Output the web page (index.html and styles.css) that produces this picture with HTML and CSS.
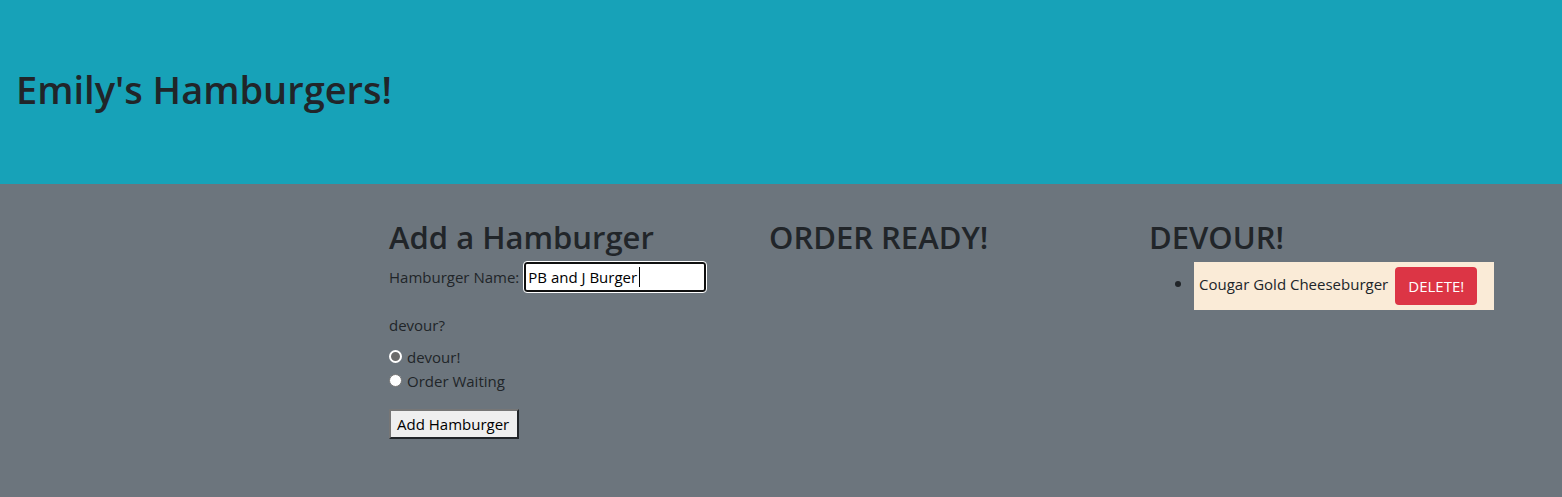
FILE: index.html
```html
<!DOCTYPE html>
<html lang="en">
<head>
<meta charset="utf-8">
<title>Emily's Hamburgers!</title>
<link rel="stylesheet" href="styles.css">
</head>
<body>
<header class="banner"><h1 class="title">Emily's Hamburgers!</h1></header>
<main class="columns">
  <section class="column">
    <h2 class="heading">Add a Hamburger</h2>
    <form class="form">
      <div class="name-row">
        <label for="name">Hamburger Name:</label>
        <div class="field"><input class="name-input" id="name" type="text" value="PB and J Burger"><span class="caret"></span></div>
      </div>
      <fieldset class="options">
        <legend class="legend">devour?</legend>
        <label class="option"><input class="radio" type="radio" name="devoured" checked>devour!</label>
        <label class="option"><input class="radio" type="radio" name="devoured">Order Waiting</label>
      </fieldset>
      <button class="add" type="submit">Add Hamburger</button>
    </form>
  </section>
  <section class="column">
    <h2 class="heading">ORDER READY!</h2>
  </section>
  <section class="column">
    <h2 class="heading">DEVOUR!</h2>
    <ul class="list">
      <li class="item"><span class="burger">Cougar Gold Cheeseburger</span><button class="delete" type="button">DELETE!</button></li>
    </ul>
  </section>
</main>
</body>
</html>
```
FILE: styles.css
```css
* { box-sizing: border-box; }
body {
  margin: 0;
  background: #6c757d;
  color: #212529;
  font: 400 15px/24px "Open Sans", "Noto Sans", sans-serif;
}
.banner { padding: 65px 16px 63px; background: #17a2b8; }
.title { margin: 0 0 8px; font-size: 38px; line-height: 48px; font-weight: 600; }
.columns {
  display: grid;
  grid-template-columns: repeat(3, 1fr);
  max-width: 1140px;
  margin: 34px 48px 0 auto;
}
.column { padding: 0 15px; }
.heading { margin: 0 0 6px; font-size: 31px; line-height: 38px; font-weight: 600; }
.name-row { display: flex; align-items: center; gap: 5px; white-space: nowrap; }
.field { position: relative; }
.name-input {
  display: block;
  width: 182px;
  height: 30px;
  padding: 0 2px;
  border: 2px solid #101010;
  border-radius: 3px;
  outline: 1px solid #fff;
  outline-offset: 0;
  background: #fff;
  color: #000;
  font: inherit;
}
.caret { position: absolute; left: 115px; top: 5px; width: 1px; height: 20px; background: #000; }
.options { margin: 21px 0 16px; padding: 0; border: 0; }
.legend { margin-bottom: 8px; padding: 0; }
.option { display: flex; align-items: center; gap: 5px; }
.radio {
  appearance: none;
  width: 13px;
  height: 13px;
  margin: 0 0 2px;
  border: 1px solid #767676;
  border-radius: 50%;
  background: #fff;
}
.radio:checked { border: 2px solid #fff; background: #6b6b6b; }
.add {
  height: 30px;
  padding: 0 8px 0 6px;
  border: 2px solid;
  border-color: #767676 #212529 #212529 #767676;
  background: #efefef;
  color: #000;
  font: inherit;
}
.list { margin: 0; padding-left: 45px; }
.item { width: 300px; padding: 5px; background: #faebd7; }
.item::marker { font-size: 18px; }
.delete {
  height: 38px;
  margin-left: 7px;
  padding: 0 13px;
  border: 0;
  border-radius: 4px;
  background: #dc3545;
  color: #fff;
  font: inherit;
  vertical-align: middle;
}
```
